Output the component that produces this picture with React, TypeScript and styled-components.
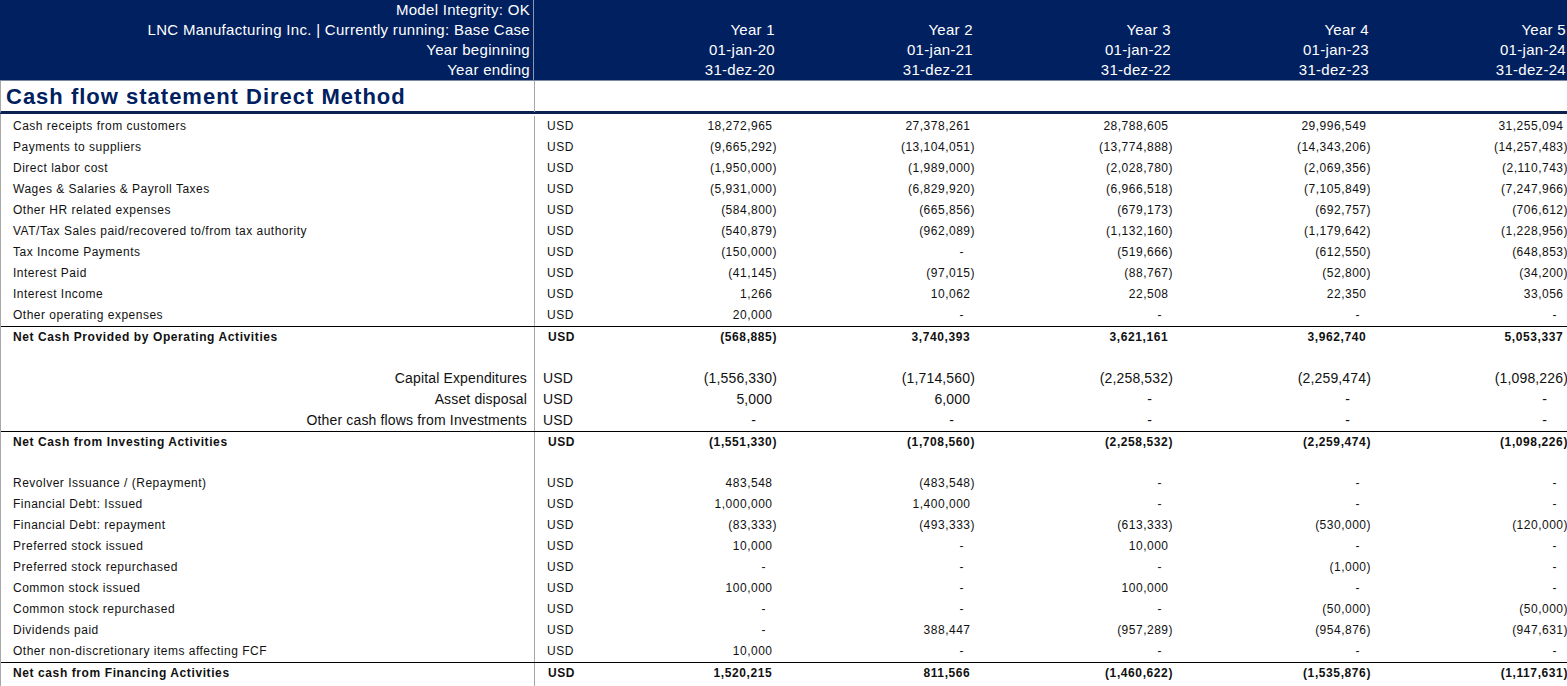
import React from 'react';
import styled, { createGlobalStyle, css } from 'styled-components';

const COLS = '534px 44px 198px 198px 198px 198px 197px';
const NAVY = '#002060';

const GlobalStyle = createGlobalStyle`
  html, body { margin: 0; padding: 0; background: #fff; overflow: hidden; }
  body { font-family: "Liberation Sans", Arial, sans-serif; color: #111; }
  #root { width: 1567px; height: 686px; overflow: hidden; }
`;

const Sheet = styled.div`
  width: 1567px;
  height: 686px;
  overflow: hidden;
  display: flex;
  flex-direction: column;
`;

const Header = styled.header`
  display: grid;
  grid-template-columns: ${COLS};
  height: 81px;
  background: ${NAVY};
  color: #fff;
  font-size: 15px;
  letter-spacing: 0.3px;
  border-bottom: 1px solid #7d89a6;
  box-sizing: border-box;
`;

const HeaderCell = styled.div<{ $divider?: boolean }>`
  display: flex;
  flex-direction: column;
  justify-content: flex-end;
  align-items: flex-end;
  padding-right: ${(p) => (p.$divider ? '3px' : '1px')};
  border-right: ${(p) => (p.$divider ? '1px solid #8d97b2' : 'none')};
`;

const HeaderLine = styled.div`
  height: 20px;
  line-height: 19px;
  white-space: nowrap;
`;

const TitleRow = styled.div`
  display: grid;
  grid-template-columns: ${COLS};
  height: 33px;
  border-bottom: 3px solid #0d2150;
  border-left: 1px solid #a8a8a8;
  box-sizing: border-box;
`;

const Title = styled.h1`
  margin: 0;
  padding-left: 5px;
  font-size: 22px;
  letter-spacing: 1px;
  font-weight: bold;
  color: ${NAVY};
  line-height: 31px;
  border-right: 1px solid #a8a8a8;
  white-space: nowrap;
`;

const Body = styled.div`
  flex: 1;
  border-left: 1px solid #a8a8a8;
  padding-top: 2px;
  display: flex;
  flex-direction: column;
`;

type Kind = 'item' | 'net' | 'large' | 'blank';

const Row = styled.div<{ $kind: Kind }>`
  display: grid;
  grid-template-columns: ${COLS};
  height: 21px;
  line-height: 21px;
  box-sizing: border-box;
  font-size: 12px;
  letter-spacing: 0.5px;
  white-space: nowrap;
  ${(p) =>
    p.$kind === 'net' &&
    css`
      font-weight: bold;
      letter-spacing: 0.6px;
      border-top: 1px solid #000;
      line-height: 20px;
    `}
  ${(p) =>
    p.$kind === 'large' &&
    css`
      font-size: 14px;
      letter-spacing: 0.15px;
    `}
`;

const Label = styled.div<{ $kind: Kind }>`
  border-right: 1px solid #a8a8a8;
  padding-left: 12px;
  ${(p) =>
    p.$kind === 'large' &&
    css`
      text-align: right;
      padding-left: 0;
      padding-right: 7px;
    `}
`;

const Unit = styled.div<{ $kind: Kind }>`
  padding-left: ${(p) => (p.$kind === 'large' ? '8px' : p.$kind === 'net' ? '13px' : '12px')};
`;

const Value = styled.div<{ $kind: Kind; $dash?: boolean }>`
  text-align: right;
  padding-right: ${(p) => (p.$dash ? (p.$kind === 'large' ? '21px' : '11px') : '0')};
`;

const ParenPad = styled.span`
  visibility: hidden;
`;

type Line = { label: string; kind: Kind; values?: string[] };

const L = (label: string, values: string[], kind: Kind = 'item'): Line => ({ label, kind, values });
const BLANK: Line = { label: '', kind: 'blank' };

const lines: Line[] = [
  L('Cash receipts from customers', ['18,272,965', '27,378,261', '28,788,605', '29,996,549', '31,255,094']),
  L('Payments to suppliers', ['(9,665,292)', '(13,104,051)', '(13,774,888)', '(14,343,206)', '(14,257,483)']),
  L('Direct labor cost', ['(1,950,000)', '(1,989,000)', '(2,028,780)', '(2,069,356)', '(2,110,743)']),
  L('Wages & Salaries & Payroll Taxes', ['(5,931,000)', '(6,829,920)', '(6,966,518)', '(7,105,849)', '(7,247,966)']),
  L('Other HR related expenses', ['(584,800)', '(665,856)', '(679,173)', '(692,757)', '(706,612)']),
  L('VAT/Tax Sales paid/recovered to/from tax authority', ['(540,879)', '(962,089)', '(1,132,160)', '(1,179,642)', '(1,228,956)']),
  L('Tax Income Payments', ['(150,000)', '-', '(519,666)', '(612,550)', '(648,853)']),
  L('Interest Paid', ['(41,145)', '(97,015)', '(88,767)', '(52,800)', '(34,200)']),
  L('Interest Income', ['1,266', '10,062', '22,508', '22,350', '33,056']),
  L('Other operating expenses', ['20,000', '-', '-', '-', '-']),
  L('Net Cash Provided by Operating Activities', ['(568,885)', '3,740,393', '3,621,161', '3,962,740', '5,053,337'], 'net'),
  BLANK,
  L('Capital Expenditures', ['(1,556,330)', '(1,714,560)', '(2,258,532)', '(2,259,474)', '(1,098,226)'], 'large'),
  L('Asset disposal', ['5,000', '6,000', '-', '-', '-'], 'large'),
  L('Other cash flows from Investments', ['-', '-', '-', '-', '-'], 'large'),
  L('Net Cash from Investing Activities', ['(1,551,330)', '(1,708,560)', '(2,258,532)', '(2,259,474)', '(1,098,226)'], 'net'),
  BLANK,
  L('Revolver Issuance / (Repayment)', ['483,548', '(483,548)', '-', '-', '-']),
  L('Financial Debt: Issued', ['1,000,000', '1,400,000', '-', '-', '-']),
  L('Financial Debt: repayment', ['(83,333)', '(493,333)', '(613,333)', '(530,000)', '(120,000)']),
  L('Preferred stock issued', ['10,000', '-', '10,000', '-', '-']),
  L('Preferred stock repurchased', ['-', '-', '-', '(1,000)', '-']),
  L('Common stock issued', ['100,000', '-', '100,000', '-', '-']),
  L('Common stock repurchased', ['-', '-', '-', '(50,000)', '(50,000)']),
  L('Dividends paid', ['-', '388,447', '(957,289)', '(954,876)', '(947,631)']),
  L('Other non-discretionary items affecting FCF', ['10,000', '-', '-', '-', '-']),
  L('Net cash from Financing Activities', ['1,520,215', '811,566', '(1,460,622)', '(1,535,876)', '(1,117,631)'], 'net'),
];

const years = [
  { y: 'Year 1', b: '01-jan-20', e: '31-dez-20' },
  { y: 'Year 2', b: '01-jan-21', e: '31-dez-21' },
  { y: 'Year 3', b: '01-jan-22', e: '31-dez-22' },
  { y: 'Year 4', b: '01-jan-23', e: '31-dez-23' },
  { y: 'Year 5', b: '01-jan-24', e: '31-dez-24' },
];

function Cell({ v, kind }: { v: string; kind: Kind }) {
  if (v === '-') return <Value $kind={kind} $dash>-</Value>;
  const neg = v.startsWith('(');
  return (
    <Value $kind={kind}>
      {v}
      {!neg && <ParenPad>)</ParenPad>}
    </Value>
  );
}

export default function App() {
  return (
    <Sheet>
      <GlobalStyle />
      <Header>
        <HeaderCell $divider>
          <HeaderLine>Model Integrity: OK</HeaderLine>
          <HeaderLine>LNC Manufacturing Inc. | Currently running: Base Case</HeaderLine>
          <HeaderLine>Year beginning</HeaderLine>
          <HeaderLine>Year ending</HeaderLine>
        </HeaderCell>
        <HeaderCell />
        {years.map((yr) => (
          <HeaderCell key={yr.y}>
            <HeaderLine>{yr.y}</HeaderLine>
            <HeaderLine>{yr.b}</HeaderLine>
            <HeaderLine>{yr.e}</HeaderLine>
          </HeaderCell>
        ))}
      </Header>
      <TitleRow>
        <Title>Cash flow statement Direct Method</Title>
      </TitleRow>
      <Body>
        {lines.map((ln, i) => (
          <Row key={i} $kind={ln.kind}>
            <Label $kind={ln.kind}>{ln.label}</Label>
            <Unit $kind={ln.kind}>{ln.kind === 'blank' ? '' : 'USD'}</Unit>
            {ln.values?.map((v, j) => <Cell key={j} v={v} kind={ln.kind} />)}
          </Row>
        ))}
        <Row $kind="blank">
          <Label $kind="blank" />
        </Row>
      </Body>
    </Sheet>
  );
}
